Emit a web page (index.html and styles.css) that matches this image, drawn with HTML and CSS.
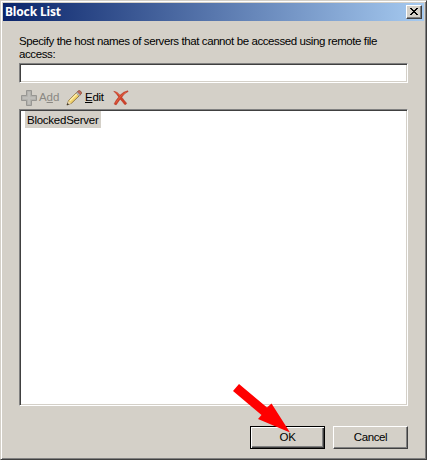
FILE: index.html
```html
<!DOCTYPE html>
<html lang="en">
<head>
<meta charset="utf-8">
<title>Block List</title>
<link rel="stylesheet" href="styles.css">
</head>
<body>
<main class="window">
  <header class="titlebar">
    <h1 class="title">Block List</h1>
    <button class="close" aria-label="Close">
      <svg width="8" height="7" viewBox="0 0 8 7" shape-rendering="crispEdges"><path d="M0 0h2v1h1v1h2V1h1V0h2v1H7v1H6v1H5v1h1v1h1v1h1v1H6V6H5V5H3v1H2v1H0V6h1V5h1V4h1V3H2V2H1V1H0z"/></svg>
    </button>
  </header>
  <div class="content">
    <label class="prompt" for="host"><span class="line1">Specify the host names of servers that cannot be accessed using remote file</span><br><span class="line2">access:</span></label>
    <input class="sunken host" id="host" type="text">
    <nav class="toolbar">
      <span class="tool disabled">
        <svg class="plus" width="16" height="16" viewBox="0 0 16 16"><path d="M5.5 .5h5v5h5v5h-5v5h-5v-5h-5v-5h5z" fill="#b0afab" stroke="#979693"/><path d="M6.8 1.8h2.4v5h5v2.4h-5v5H6.8v-5h-5V6.8h5z" fill="#bfbeba"/></svg>
        <span class="add">A<u>d</u>d</span>
      </span>
      <span class="tool">
        <svg class="pencil" width="17" height="16" viewBox="0 0 17 16"><path d="M1 15l1.6-4.4L12 1.2q1.4-1 2.7.2t.3 2.7L5.4 13.3z" fill="#f2d36b" stroke="#8a6d38" stroke-width=".9"/><path d="M3.8 10.8L12 2.8" stroke="#fff0ae" stroke-width="1.3"/><path d="M11.2 2l1-.9q1.4-.8 2.5.3t.4 2.5l-1 1z" fill="#c56a5d" stroke="#955048" stroke-width=".7"/><path d="M10.2 3l1-1 3 3-1 1z" fill="#c5c6c9" stroke="#77777b" stroke-width=".5"/><path d="M1 15l1.5-4.1 2.5 2.5z" fill="#ead7ad"/><path d="M.7 15.3l.8-2.4 1.6 1.6z" fill="#353330"/></svg>
        <span class="edit"><u>E</u>dit</span>
      </span>
      <svg class="delete" width="16" height="16" viewBox="0 0 16 16"><path d="M.8 1.3Q4 1.5 7 5.2 10.5 1.5 14.8.8q.6.3.2.8Q11 3.5 8.8 7.2q2.4 3.3 4.8 6-.3 1.7-2 1.2Q9.8 12 7.2 9.2 5 12 3.3 14.7q-2 .2-2-1.2Q3 10 5.7 7 3.7 3.8.8 1.3z" fill="#ce4229" stroke="#b52d1d" stroke-width=".5"/><path d="M2.5 2.1Q5 3 7 6.1M2.6 13.2Q7 5.5 13 2" fill="none" stroke="#e86b4b" stroke-width=".7"/></svg>
    </nav>
    <div class="sunken list"><span class="item">BlockedServer</span></div>
    <footer class="actions">
      <button class="button ok"><span>OK</span></button>
      <button class="button"><span class="cancel">Cancel</span></button>
    </footer>
  </div>
  <svg class="pointer" width="58" height="50" viewBox="0 0 58 50"><path d="M1 8L7 1l28 23.500 4.500-4L58 49.500 26 36l3.500-4z" fill="#f00"/></svg>
</main>
</body>
</html>
```
FILE: styles.css
```css
* { box-sizing: border-box; }
body { margin: 0; }
.window {
  position: relative;
  width: 427px;
  height: 460px;
  padding: 1px;
  background: #d4d0c8;
  border: 1px solid;
  border-color: #d4d0c8 #404040 #404040 #d4d0c8;
  box-shadow: inset 1px 1px #fff, inset -1px -1px #808080;
  font: 11.5px/13px "Liberation Sans", sans-serif;
  letter-spacing: -.25px;
  color: #000;
  overflow: hidden;
}
.titlebar {
  display: flex;
  align-items: center;
  justify-content: space-between;
  height: 18px;
  margin: 1px 1px 0;
  padding: 0 2px 0 2px;
  background: linear-gradient(90deg, #0a246a, #a6caf0);
}
.title {
  margin: 0;
  color: #fff;
  font: bold 12px/16px "Noto Sans", sans-serif;
  letter-spacing: -.15px;
}
button { font: inherit; color: inherit; letter-spacing: inherit; }
.close {
  display: flex;
  align-items: center;
  justify-content: center;
  width: 16px;
  height: 14px;
  padding: 0 1px 1px 0;
  background: #d4d0c8;
  border: 1px solid;
  border-color: #fff #404040 #404040 #fff;
  box-shadow: inset -1px -1px #808080;
}
.content { padding: 14px 17px 0; }
.prompt { display: block; height: 28px; white-space: nowrap; }
.line1 { letter-spacing: -.41px; }
.line2 { letter-spacing: -.4px; }
.sunken {
  display: block;
  width: 389px;
  background: #fff;
  border: 1px solid;
  border-color: #808080 #fff #fff #808080;
  box-shadow: inset 1px 1px #404040, inset -1px -1px #d4d0c8;
}
.host { height: 20px; padding: 2px 4px; outline: none; border-radius: 0; }
.toolbar {
  display: flex;
  align-items: center;
  height: 26px;
  padding: 3px 0 0 2px;
}
.tool { display: flex; align-items: center; }
.tool:first-child { width: 45px; }
.tool + .tool { width: 47px; }
.disabled { color: #8a8883; }
.add { margin-left: 2px; letter-spacing: -.1px; }
.edit { margin-left: 2px; }
u { text-underline-offset: 1px; }
.list { height: 297px; padding: 1px 5px; }
.item {
  display: block;
  width: 76px;
  height: 17px;
  padding: 1px 0 0 2px;
  line-height: 17px;
  background: #d4d0c8;
}
.actions {
  display: flex;
  justify-content: flex-end;
  gap: 8px;
  margin-top: 20px;
}
.button {
  width: 75px;
  height: 23px;
  padding: 0;
  background: #d4d0c8;
  border: 1px solid;
  border-color: #fff #404040 #404040 #fff;
  border-radius: 0;
  box-shadow: inset -1px -1px #808080;
}
.cancel { letter-spacing: -.4px; }
.ok {
  border-color: #000;
  box-shadow: inset 1px 1px #fff, inset -1px -1px #404040, inset -2px -2px #808080;
}
.pointer { position: absolute; left: 231px; top: 382px; }
```
